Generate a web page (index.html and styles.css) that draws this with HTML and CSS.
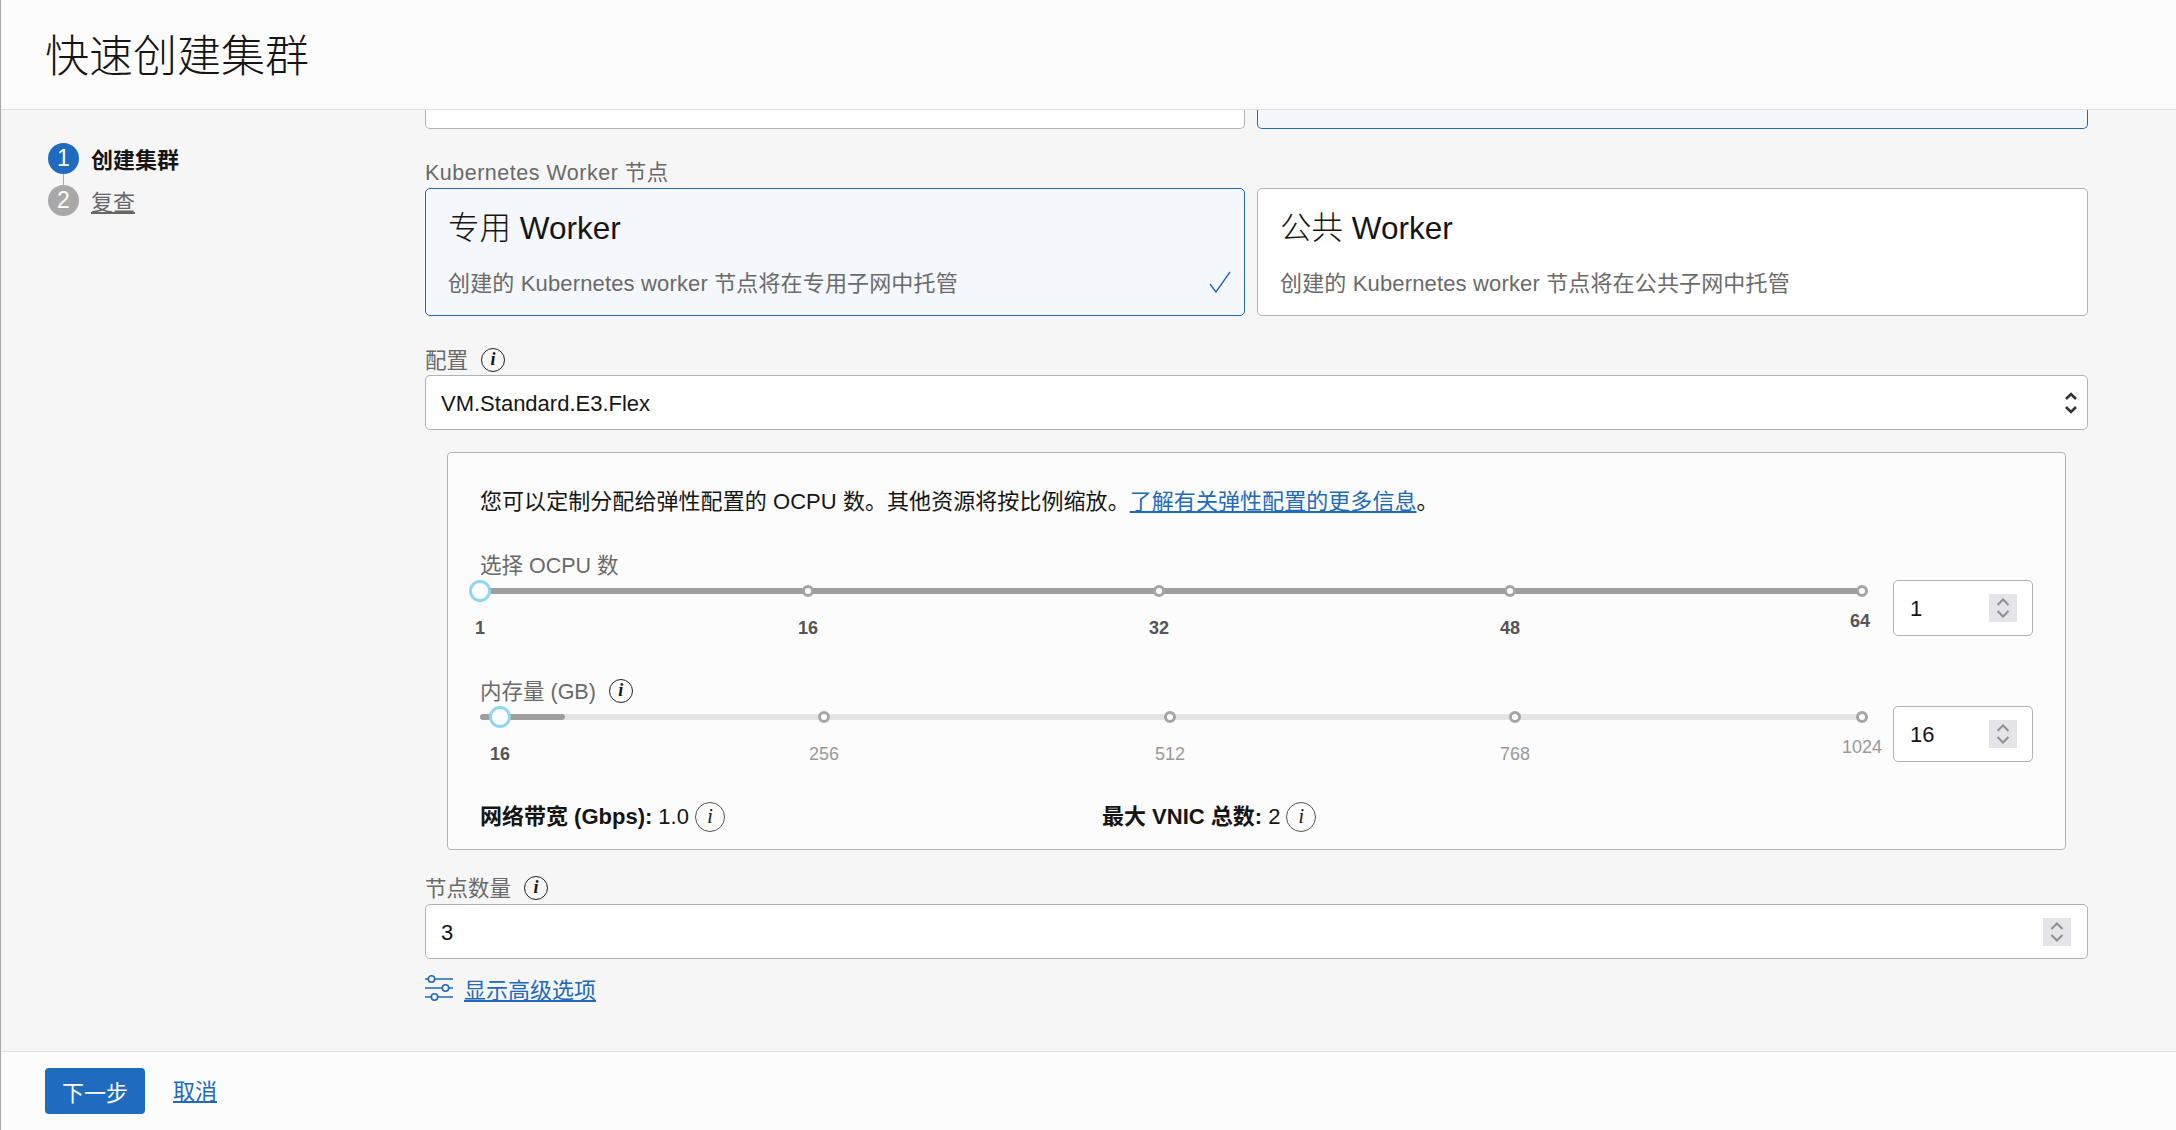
FILE: index.html
```html
<!DOCTYPE html>
<html lang="zh-CN">
<head>
  <meta charset="UTF-8" />
  <title>快速创建集群</title>
  <link rel="stylesheet" href="styles.css">
</head>
<body>
  <div class="page">
    <header class="top-bar">
      <h1>快速创建集群</h1>
    </header>

    <div class="middle">
      <!-- Steps -->
      <nav class="steps">
        <div class="step step-active"><span class="step-num">1</span><span class="step-text">创建集群</span></div>
        <div class="step"><span class="step-num">2</span><a class="step-text" href="#">复查</a></div>
      </nav>

      <main class="form">
        <!-- cards scrolled off under the header -->
        <div class="card-row cut-row">
          <div class="card cut"></div>
          <div class="card cut card-on"></div>
        </div>

        <div class="label worker-label">Kubernetes Worker 节点</div>
        <div class="card-row">
          <div class="card card-on">
            <div class="card-title">专用 Worker</div>
            <div class="card-text">创建的 Kubernetes worker 节点将在专用子网中托管</div>
            <svg class="check" width="22" height="22" viewBox="0 0 22 22"><path d="M1 13l6 8L21 1" fill="none" stroke="#2169bd" stroke-width="1.4"/></svg>
          </div>
          <div class="card">
            <div class="card-title">公共 Worker</div>
            <div class="card-text">创建的 Kubernetes worker 节点将在公共子网中托管</div>
          </div>
        </div>

        <div class="label shape-label"><span>配置</span><span class="info">i</span></div>
        <div class="field">
          <span class="field-text">VM.Standard.E3.Flex</span>
          <svg class="select-arrows" width="14" height="24" viewBox="0 0 14 24"><path d="M2 8l5-5 5 5M2 16l5 5 5-5" fill="none" stroke="#333" stroke-width="2.6"/></svg>
        </div>

        <section class="panel">
          <p class="intro">您可以定制分配给弹性配置的 OCPU 数。其他资源将按比例缩放。<a href="#">了解有关弹性配置的更多信息</a>。</p>

          <div class="slider-row">
            <div class="slider-col">
              <div class="label">选择 OCPU 数</div>
              <div class="slider slider-full">
                <span class="thumb" style="left: 0%"></span>
                <span class="tick" style="left: 23.73%"></span>
                <span class="tick" style="left: 49.13%"></span>
                <span class="tick" style="left: 74.53%"></span>
                <span class="tick" style="left: 100%"></span>
                <span class="mark mark-on" style="left: 0%">1</span>
                <span class="mark mark-on" style="left: 23.73%">16</span>
                <span class="mark mark-on" style="left: 49.13%">32</span>
                <span class="mark mark-on" style="left: 74.53%">48</span>
                <span class="mark mark-on mark-last" style="left: 99.85%">64</span>
              </div>
            </div>
            <div class="num-box">
              <span class="field-text">1</span>
              <span class="spin"><svg width="14" height="24" viewBox="0 0 14 24"><path d="M1.5 9l5.5-5.500 5.500 5.500M1.500 15l5.500 5.500 5.500-5.500" fill="none" stroke="#8e8e96" stroke-width="2"/></svg></span>
            </div>
          </div>

          <div class="slider-row slider-row-2">
            <div class="slider-col">
              <div class="label"><span>内存量 (GB)</span><span class="info">i</span></div>
              <div class="slider">
                <span class="fill" style="width: 6.15%"></span>
                <span class="thumb" style="left: 1.45%"></span>
                <span class="tick" style="left: 24.89%"></span>
                <span class="tick" style="left: 49.93%"></span>
                <span class="tick" style="left: 74.89%"></span>
                <span class="tick" style="left: 100%"></span>
                <span class="mark mark-on" style="left: 1.45%">16</span>
                <span class="mark" style="left: 24.89%">256</span>
                <span class="mark" style="left: 49.93%">512</span>
                <span class="mark" style="left: 74.89%">768</span>
                <span class="mark mark-last" style="left: 100%">1024</span>
              </div>
            </div>
            <div class="num-box">
              <span class="field-text">16</span>
              <span class="spin"><svg width="14" height="24" viewBox="0 0 14 24"><path d="M1.5 9l5.5-5.500 5.500 5.500M1.500 15l5.500 5.500 5.500-5.500" fill="none" stroke="#8e8e96" stroke-width="2"/></svg></span>
            </div>
          </div>

          <div class="stats">
            <div class="stat"><b>网络带宽 (Gbps):</b><span>1.0</span><span class="info info-big">i</span></div>
            <div class="stat"><b>最大 VNIC 总数:</b><span>2</span><span class="info info-big">i</span></div>
          </div>
        </section>

        <div class="label count-label"><span>节点数量</span><span class="info">i</span></div>
        <div class="field">
          <span class="field-text">3</span>
          <span class="spin"><svg width="14" height="24" viewBox="0 0 14 24"><path d="M1.5 9l5.5-5.500 5.500 5.500M1.500 15l5.500 5.500 5.500-5.500" fill="none" stroke="#8e8e96" stroke-width="2"/></svg></span>
        </div>

        <div class="advanced">
          <svg width="28" height="28" viewBox="0 0 28 28" fill="none" stroke="#2169bd" stroke-width="1.6">
            <path d="M0 5h3M10 5h18M0 14h17M24 14h4M0 23h6M13 23h15"/>
            <circle cx="6.500" cy="5" r="3.200"/>
            <circle cx="20.500" cy="14" r="3.200"/>
            <circle cx="9.500" cy="23" r="3.200"/>
          </svg>
          <a href="#">显示高级选项</a>
        </div>
      </main>
    </div>

    <footer class="bottom-bar">
      <button type="button" class="next-btn">下一步</button>
      <a href="#">取消</a>
    </footer>
  </div>
</body>
</html>
```

FILE: styles.css
```css
* {
  box-sizing: border-box;
}

html, body {
  margin: 0;
  height: 100%;
}

body {
  font-family: "Liberation Sans", "Noto Sans CJK SC", sans-serif;
  font-size: 22px;
  color: #161513;
  background: #f6f6f6;
  overflow: hidden;
}

a {
  color: #2169bd;
}

.page {
  display: flex;
  flex-direction: column;
  height: 100%;
  border-left: 1px solid #aaa;
}

.top-bar {
  flex: none;
  height: 110px;
  padding-left: 44px;
  background: #fcfcfc;
  border-bottom: 1px solid #dfdfdf;
}

.top-bar h1 {
  margin: 0;
  font-size: 44px;
  font-weight: 300;
  line-height: 113px;
}

.middle {
  flex: 1;
  display: flex;
  min-height: 0;
}

/* Steps */
.steps {
  flex: none;
  width: 424px;
  padding: 33px 0 0 47px;
}

.step {
  position: relative;
  display: flex;
  align-items: center;
  gap: 12px;
  height: 31px;
  margin-bottom: 11px;
}

.step-text {
  margin-top: -2px;
}

.step a {
  color: #666;
}

.step-active {
  font-weight: 700;
}

.step-active::after {
  content: "";
  position: absolute;
  left: 15px;
  top: 31px;
  width: 1px;
  height: 11px;
  background: #aaa;
}

.step-num {
  width: 31px;
  height: 31px;
  border-radius: 50%;
  background: #a8a8a8;
  color: white;
  font-size: 23px;
  font-weight: 400;
  text-align: center;
  line-height: 31px;
}

.step-active .step-num {
  background: #1f6bbf;
}

/* Form */
.form {
  flex: none;
  width: 1663px;
}

.label {
  display: flex;
  align-items: center;
  gap: 13px;
  height: 26px;
  padding-top: 2px;
  font-size: 21.5px;
  line-height: 26px;
  color: #6a6a6a;
}

.worker-label {
  margin-top: 30px;
  margin-bottom: 3px;
  letter-spacing: 0.5px;
}

.shape-label {
  margin-top: 31px;
  margin-bottom: 2px;
}

.count-label {
  margin-top: 25px;
  margin-bottom: 3px;
}

.info {
  flex: none;
  width: 24px;
  height: 24px;
  margin-top: -2px;
  border: 1.5px solid #222;
  border-radius: 50%;
  color: #161513;
  font-family: "Liberation Serif", serif;
  font-size: 18px;
  font-style: italic;
  font-weight: 700;
  line-height: 20px;
  text-align: center;
}

.info-big {
  width: 30px;
  height: 30px;
  margin-top: 0;
  border-color: #555;
  font-size: 20px;
  font-weight: 400;
  line-height: 26px;
}

.card-row {
  display: grid;
  grid-template-columns: 820px 1fr;
  gap: 12px;
}

.card {
  position: relative;
  height: 128px;
  padding: 17px 22px 0;
  background: white;
  border: 1px solid #afb3b8;
  border-radius: 5px;
}

.card-on {
  background: #f4f7fb;
  border-color: #2169bd;
}

.cut-row {
  height: 19px;
}

.cut {
  height: 19px;
  border-top: 0;
  border-radius: 0 0 5px 5px;
}

.card-title {
  font-size: 31.5px;
  font-weight: 300;
  line-height: 44px;
}

.card-text {
  margin-top: 18px;
  line-height: 32px;
  letter-spacing: 0.15px;
  color: #6a6a6a;
}

.check {
  position: absolute;
  right: 13px;
  bottom: 22px;
}

.field {
  display: flex;
  align-items: center;
  justify-content: space-between;
  height: 55px;
  padding: 0 16px 0 15px;
  background: white;
  border: 1px solid #afb3b8;
  border-radius: 5px;
}

.field-text {
  padding-top: 2px;
}

.select-arrows {
  margin-right: -7px;
}

.panel {
  margin-top: 22px;
  margin-left: 22px;
  margin-right: 22px;
  padding: 33px 32px 17px;
  background: #fcfcfc;
  border: 1px solid #afb3b8;
  border-radius: 4px;
}

.intro {
  margin: 0;
  padding-top: 1px;
  line-height: 30px;
  height: 30px;
  letter-spacing: 0.06px;
}

.slider-row {
  display: flex;
  justify-content: space-between;
  height: 91px;
  margin-top: 36px;
}

.slider-row-2 {
  margin-top: 35px;
}

.slider-col {
  width: 1382px;
}

/* Slider */
.slider {
  position: relative;
  height: 6px;
  margin-top: 10px;
  border-radius: 3px;
  background: #e5e5e5;
}

.slider-full {
  background: #9e9e9e;
}

.fill {
  display: block;
  height: 100%;
  border-radius: 3px;
  background: #9e9e9e;
}

.thumb, .tick {
  position: absolute;
  top: 3px;
  border-radius: 50%;
  background: white;
  transform: translate(-50%, -50%);
}

.thumb {
  width: 22px;
  height: 22px;
  border: 3px solid #8fd6f5;
  z-index: 1;
}

.tick {
  width: 12px;
  height: 12px;
  border: 3px solid #a5a5a5;
}

.mark {
  position: absolute;
  top: 29px;
  font-size: 18px;
  line-height: 22px;
  color: #999;
  transform: translateX(-50%);
}

.mark-on {
  font-weight: 700;
  color: #555;
}

.mark-last {
  top: 22px;
}

.num-box {
  display: flex;
  align-items: center;
  justify-content: space-between;
  width: 140px;
  height: 56px;
  margin-top: 28px;
  padding: 0 15px 0 16px;
  background: white;
  border: 1px solid #afb3b8;
  border-radius: 5px;
}

.spin {
  display: flex;
  align-items: center;
  justify-content: center;
  width: 28px;
  height: 28px;
  background: #e4e4e9;
}

.stats {
  display: flex;
  height: 30px;
  margin-top: 33px;
}

.stat {
  display: flex;
  align-items: center;
  gap: 6px;
  width: 622px;
  line-height: 28px;
}

.advanced {
  display: flex;
  align-items: center;
  gap: 11px;
  height: 30px;
  margin-top: 14px;
}

/* Footer */
.bottom-bar {
  flex: none;
  display: flex;
  align-items: flex-start;
  gap: 28px;
  height: 79px;
  padding: 16px 0 0 44px;
  background: #fcfcfc;
  border-top: 1px solid #dfdfdf;
}

.bottom-bar a {
  line-height: 48px;
}

.next-btn {
  width: 100px;
  height: 46px;
  padding: 0;
  border: 0;
  border-radius: 4px;
  background: #1f6bbf;
  color: white;
  font: inherit;
}
```
